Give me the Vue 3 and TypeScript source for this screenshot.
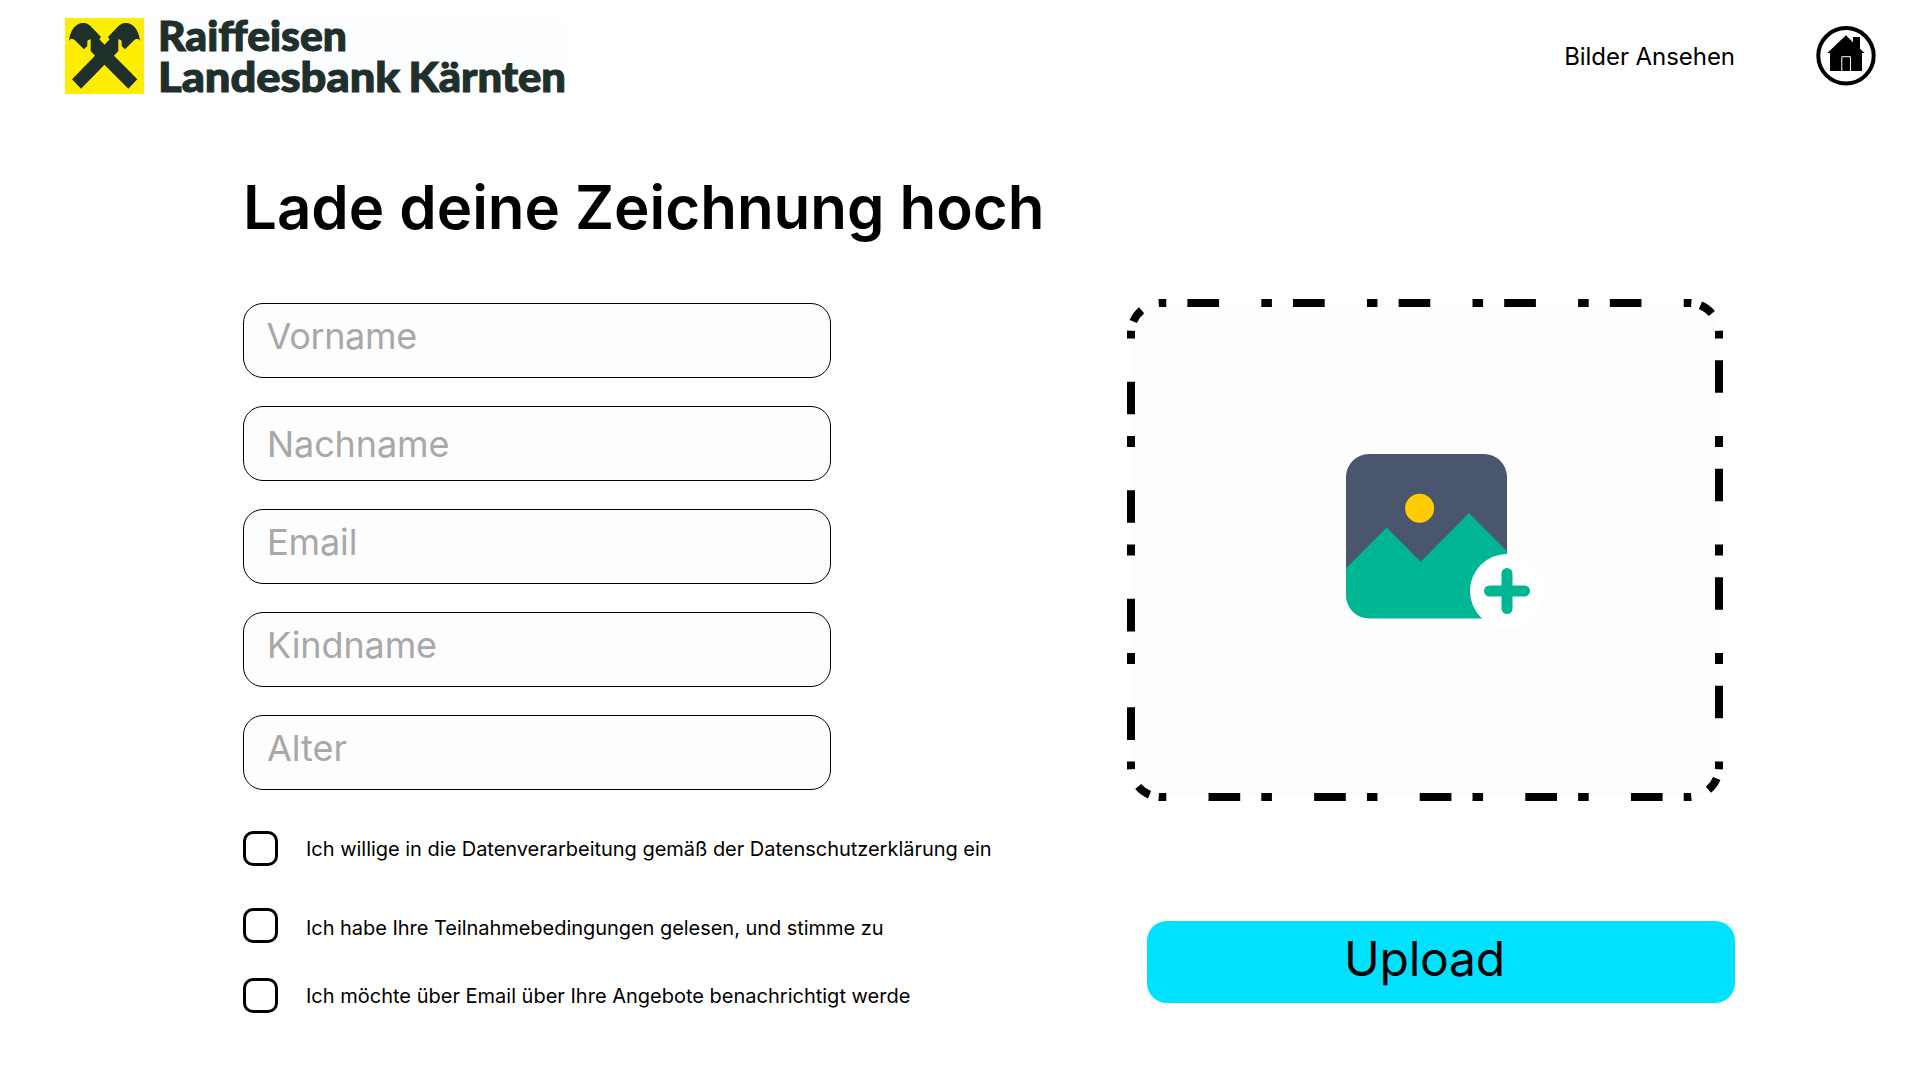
<script setup lang="ts">
interface Field {
  id: string
  label: string
}

interface Consent {
  id: string
  text: string
}

const fields: Field[] = [
  { id: 'vorname', label: 'Vorname' },
  { id: 'nachname', label: 'Nachname' },
  { id: 'email', label: 'Email' },
  { id: 'kindname', label: 'Kindname' },
  { id: 'alter', label: 'Alter' },
]

const consents: Consent[] = [
  { id: 'daten', text: 'Ich willige in die Datenverarbeitung gemäß der Datenschutzerklärung ein' },
  { id: 'teilnahme', text: 'Ich habe Ihre Teilnahmebedingungen gelesen, und stimme zu' },
  { id: 'angebote', text: 'Ich möchte über Email über Ihre Angebote benachrichtigt werde' },
]

// Each side of the frame carries a whole number of dot-dash periods (10 units each).
const sides = [
  { d: 'M34 4H562', units: 50 },
  { d: 'M562 4A30 30 0 0 1 592 34', units: 10 },
  { d: 'M592 34V468', units: 40 },
  { d: 'M592 468A30 30 0 0 1 562 498', units: 10 },
  { d: 'M562 498H34', units: 50 },
  { d: 'M34 498A30 30 0 0 1 4 468', units: 10 },
  { d: 'M4 468V34', units: 40 },
  { d: 'M4 34A30 30 0 0 1 34 4', units: 10 },
]
</script>

<template>
  <div class="page">
    <header class="header">
      <svg class="logo" width="502" height="76" viewBox="0 0 502 76">
        <rect width="500" height="76" fill="#fdfeff" />
        <rect width="79" height="76" fill="#ffed00" />
        <path
          transform="scale(0.33333) translate(-45 -54)"
          fill="#1f2f2b"
          d="M57 123C60 89 79 69 98 69C112 69 120 75 128 85L153 111L148 118L163.500 134L179 118L174 111L199 85C207 75 215 69 229 69C248 69 267 89 270 123L266 118C260 116 256 117 253 120L225 148L215 138V122L205 117V153L192 167L262 238L235 266L163.500 194L93 266L66 238L135 167L122 153V117L112 122V138L102 148L74 120C71 117 67 116 61 118Z"
        />
        <g class="wordmark">
          <text x="93" y="32.500" textLength="189" lengthAdjust="spacingAndGlyphs">Raiffeisen</text>
          <text x="93" y="73.500" textLength="242" lengthAdjust="spacingAndGlyphs">Landesbank</text>
          <text x="343.500" y="73.500" textLength="157.500" lengthAdjust="spacingAndGlyphs">Kärnten</text>
        </g>
      </svg>
      <nav class="nav">
        <a class="link">Bilder Ansehen</a>
        <svg class="home" width="60" height="60" viewBox="0 0 60 60">
          <circle cx="30" cy="29.800" r="27.700" fill="none" stroke="#000" stroke-width="4" />
          <path d="M30 9.300L37 16.300V11H44V22.700L48.500 27H46V45H14V27H11.300Z" />
          <path d="M25.800 45V30.700H34.500V45" fill="none" stroke="#fff" stroke-width="1" />
        </svg>
      </nav>
    </header>

    <main class="main">
      <section class="form">
        <h1>Lade deine Zeichnung hoch</h1>
        <div class="fields">
          <div v-for="f in fields" :key="f.id" class="field" :class="f.id">
            <span>{{ f.label }}</span>
          </div>
        </div>
        <div class="consents">
          <div v-for="c in consents" :key="c.id" class="consent" :class="c.id">
            <span class="box"></span>
            <span class="text">{{ c.text }}</span>
          </div>
        </div>
      </section>

      <section class="upload">
        <svg class="drop" width="596" height="502" viewBox="0 0 596 502">
          <rect x="4" y="4" width="588" height="494" rx="30" fill="#fdfdfd" />
          <path v-for="s in sides" :key="s.d" class="side" :d="s.d" :pathLength="s.units" />
          <g transform="translate(219 155)">
            <path d="M0 120V23A23 23 0 0 1 23 0H138A23 23 0 0 1 161 23V120Z" fill="#4a566e" />
            <path d="M0 114.300L40.700 73.500L74.700 107.700L123 59L161 97.300V141.500A23 23 0 0 1 138 164.500H23A23 23 0 0 1 0 141.500Z" fill="#00b594" />
            <circle cx="73.600" cy="54.300" r="14.500" fill="#ffcc05" />
            <circle cx="161" cy="137" r="37" fill="#fff" />
            <path d="M143.500 137H178.500M161 119.500V154.500" stroke="#00b594" stroke-width="11" stroke-linecap="round" />
          </g>
        </svg>
        <button type="button" class="button">Upload</button>
      </section>
    </main>
  </div>
</template>

<style>
body {
  margin: 0;
  background: #fff;
}
</style>

<style scoped>
.page {
  width: 1920px;
  height: 1080px;
  overflow: hidden;
  background: #fff;
  color: #000;
  font-family: Inter, "Liberation Sans", sans-serif;
}
.header {
  display: flex;
  justify-content: space-between;
  box-sizing: border-box;
  height: 112px;
  padding: 18px 44px 0 65px;
}
.logo {
  display: block;
  overflow: visible;
}
.wordmark {
  font-family: Lato, sans-serif;
  font-weight: 900;
  font-size: 42.5px;
  fill: #1f2f2b;
  stroke: #1f2f2b;
  stroke-width: 1.1px;
}
.nav {
  display: flex;
  align-items: center;
  height: 76px;
  gap: 81px;
}
.link {
  font-size: 24px;
  line-height: 29px;
  letter-spacing: -0.05px;
}
.home {
  display: block;
}
.main {
  display: flex;
  justify-content: space-between;
  padding: 0 185px 0 243px;
}
.form {
  width: 820px;
}
h1 {
  margin: 59px 0 0;
  font-size: 60px;
  line-height: 73px;
  font-weight: 600;
  letter-spacing: -0.03px;
  white-space: nowrap;
}
.fields {
  display: flex;
  flex-direction: column;
  gap: 28px;
  margin-top: 59px;
}
.field {
  box-sizing: border-box;
  width: 588px;
  height: 75px;
  padding: 10px 0 0 23px;
  border: 1px solid #000;
  border-radius: 20px;
  background: #fdfdfd;
  color: #a8a8a8;
  font-size: 36px;
  line-height: 44px;
  letter-spacing: -0.1px;
}
.field.vorname {
  padding-left: 22.5px;
  letter-spacing: -0.35px;
}
.field.nachname {
  padding-top: 15px;
}
.field.alter {
  letter-spacing: 0;
}
.consents {
  margin-top: 41px;
}
.consent {
  display: flex;
  align-items: flex-start;
  gap: 28px;
  height: 35px;
}
.box {
  box-sizing: border-box;
  width: 35px;
  height: 35px;
  border: 3px solid #000;
  border-radius: 10px;
}
.text {
  margin-top: 6px;
  font-size: 20px;
  line-height: 24px;
  letter-spacing: -0.025px;
  white-space: nowrap;
}
.teilnahme {
  margin-top: 42px;
}
.teilnahme .text {
  margin-top: 8px;
  letter-spacing: -0.04px;
}
.angebote {
  margin-top: 35px;
}
.angebote .text {
  letter-spacing: 0;
}
.upload {
  display: flex;
  flex-direction: column;
  align-items: flex-end;
  width: 608px;
  padding-top: 187px;
}
.drop {
  display: block;
  align-self: flex-start;
}
.side {
  fill: none;
  stroke: #000;
  stroke-width: 8px;
  stroke-dasharray: 1 2 3 4;
  stroke-dashoffset: 0.5;
}
.button {
  width: 588px;
  height: 82px;
  margin: 120px 0 0;
  padding: 0 33px 6px 0;
  border: 0;
  border-radius: 20px;
  background: #00e1ff;
  color: #000;
  font: 400 48px/58px Inter, "Liberation Sans", sans-serif;
  letter-spacing: -0.25px;
}
</style>
